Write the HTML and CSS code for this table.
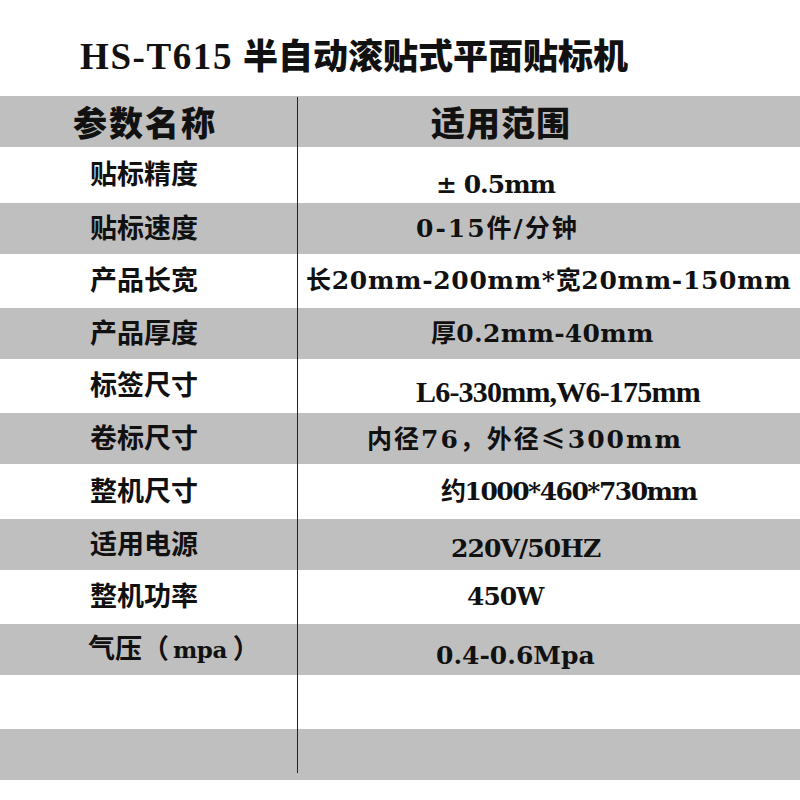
FILE: index.html
```html
<!DOCTYPE html>
<html lang="zh-CN">
<head>
<meta charset="utf-8">
<title>HS-T615 半自动滚贴式平面贴标机</title>
<link rel="stylesheet" href="styles.css">
</head>
<body>
<div class="page">
  <h1 class="title"><span class="lat">HS-T615</span> 半自动滚贴式平面贴标机</h1>
  <div class="table">
    <div class="row head"><div class="k">参数名称</div><div class="v">适用范围</div></div>
    <div class="row r1"><div class="k">贴标精度</div><div class="v">± 0.5mm</div></div>
    <div class="row r2"><div class="k">贴标速度</div><div class="v">0-15件/分钟</div></div>
    <div class="row r3"><div class="k">产品长宽</div><div class="v">长20mm-200mm*宽20mm-150mm</div></div>
    <div class="row r4"><div class="k">产品厚度</div><div class="v">厚0.2mm-40mm</div></div>
    <div class="row r5"><div class="k">标签尺寸</div><div class="v">L6-330mm,W6-175mm</div></div>
    <div class="row r6"><div class="k">卷标尺寸</div><div class="v">内径76，外径<span class="cjk">≤</span>300mm</div></div>
    <div class="row r7"><div class="k">整机尺寸</div><div class="v">约1000*460*730mm</div></div>
    <div class="row r8"><div class="k">适用电源</div><div class="v">220V/50HZ</div></div>
    <div class="row r9"><div class="k">整机功率</div><div class="v">450W</div></div>
    <div class="row r10"><div class="k">气压（<span class="mpa">mpa</span>）</div><div class="v">0.4-0.6Mpa</div></div>
    <div class="row r11"><div class="k"></div><div class="v"></div></div>
    <div class="row r12"><div class="k"></div><div class="v"></div></div>
    <div class="vline"></div>
  </div>
</div>
</body>
</html>
```
FILE: styles.css
```css
html, body {
  margin: 0;
  padding: 0;
  background: #ffffff;
}

.page {
  width: 800px;
  height: 800px;
  overflow: hidden;
  color: #111111;
}

.title {
  margin: 0;
  height: 96px;
  box-sizing: border-box;
  padding: 36px 0 0 80px;
  line-height: 36px;
  font-family: "Noto Sans CJK SC", sans-serif;
  font-weight: 900;
  font-size: 35px;
  white-space: nowrap;
}

.title .lat {
  font-family: "Liberation Serif", serif;
  font-weight: 700;
  font-size: 37px;
  letter-spacing: 1.6px;
  margin-right: 2px;
}

.table {
  position: relative;
}

.row {
  display: grid;
  grid-template-columns: 297px 1fr;
  align-items: center;
  height: 54px;
  background: #ffffff;
}

.row.head,
.row.r2,
.row.r4,
.row.r6,
.row.r8,
.row.r10,
.row.r12 {
  background: #bfbfbf;
  height: 51px;
}

.row.r1 { height: 56px; }
.row.r7 { height: 55px; }

.k {
  padding-left: 90px;
  font-family: "DejaVu Serif", "Noto Sans CJK SC", serif;
  font-weight: 700;
  font-size: 27px;
  line-height: 30px;
  white-space: nowrap;
}

.v {
  font-family: "DejaVu Serif", "Noto Sans CJK SC", serif;
  font-weight: 700;
  font-size: 25px;
  line-height: 30px;
  white-space: nowrap;
}

.cjk {
  font-family: "Noto Sans CJK SC", sans-serif;
}

.mpa {
  font-size: 23px;
  letter-spacing: -0.5px;
  padding: 0 6px 0 4px;
}

.head .k {
  padding-left: 73px;
  font-family: "Noto Sans CJK SC", sans-serif;
  font-weight: 900;
  font-size: 34px;
  letter-spacing: 2px;
  line-height: 36px;
}

.head .v {
  padding-left: 134px;
  font-family: "Noto Sans CJK SC", sans-serif;
  font-weight: 900;
  font-size: 34px;
  letter-spacing: 1px;
  line-height: 36px;
}

.r1 .v { padding-left: 139px; padding-top: 20px; letter-spacing: -1px; }
.r2 .v { padding-left: 119px; letter-spacing: 2px; }
.r3 .v { padding-left: 9px; letter-spacing: 0.7px; }
.r4 .v { padding-left: 134px; letter-spacing: 0.3px; }
.r5 .v {
  padding-left: 119px;
  padding-top: 12px;
  font-family: "Liberation Serif", "Noto Sans CJK SC", serif;
  font-size: 30px;
  letter-spacing: -0.8px;
}
.r6 .v { padding-left: 70px; letter-spacing: 2px; }
.r7 .v { padding-left: 144px; letter-spacing: -1.5px; }
.r8 .v { padding-left: 154px; padding-top: 8px; letter-spacing: -0.9px; }
.r9 .v { padding-left: 170px; letter-spacing: -1px; }
.r10 .v { padding-left: 139px; padding-top: 12px; }
.r10 .k { padding-left: 88px; }

.vline {
  position: absolute;
  left: 297px;
  top: 1px;
  width: 1px;
  height: 676px;
  background: #222222;
}
```
